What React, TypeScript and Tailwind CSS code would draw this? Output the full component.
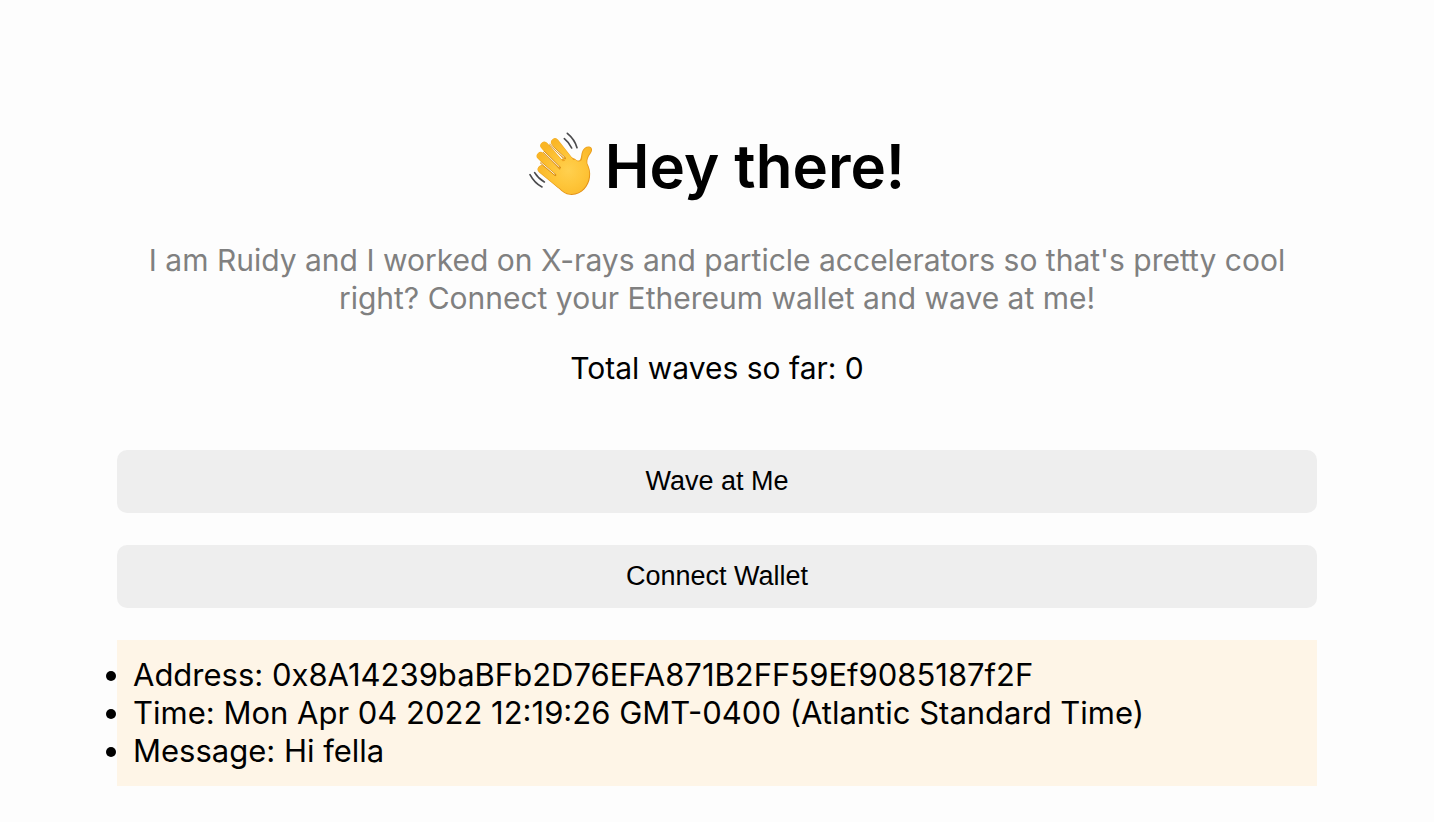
const fingers = "M102 51 L150 112 M70 61 L134 134 M59 92 L124 156 M62 132 L118 178";
const gaps = "M87 58 L132 99 M69 80 L117 127 M60 112 L103 149";
const palm =
  "M112 78 L163 101 C168 106 175 108 178 102 C181 96 180 85 184 77 C188 67 198 61 207 64 C216 68 214 78 208 86 C202 94 198 102 199 114 C206 128 209 140 207 156 C204 182 184 208 152 209 C138 209 128 204 116 192 L72 151 L104 149 L98 130 L117 124 L116 103 L132 98 Z";

function WavingHand() {
  return (
    <svg viewBox="24 20 192 192" role="img" aria-label="Waving hand" className="mb-1 size-16 shrink-0">
      <defs>
        <radialGradient id="skin" gradientUnits="userSpaceOnUse" cx="142" cy="135" r="95">
          <stop offset="0" stopColor="#ffd04f" />
          <stop offset="0.5" stopColor="#fec539" />
          <stop offset="1" stopColor="#fab626" />
        </radialGradient>
        <linearGradient id="edge" gradientUnits="userSpaceOnUse" x1="90" y1="60" x2="190" y2="210">
          <stop offset="0" stopColor="#f2ae28" />
          <stop offset="1" stopColor="#e08c12" />
        </linearGradient>
      </defs>
      <g strokeLinecap="round" strokeLinejoin="round">
        <path d={palm} fill="url(#edge)" />
        <path d={fingers} fill="none" stroke="url(#edge)" strokeWidth="24" />
        <path
          d="M125 108 L163 103 C172 111 180 110 183 102 C185 94 183 85 187 77 C191 69 199 64 205 66 C213 70 211 77 206 84 C199 93 195 102 197 115 C204 130 206 140 204 154 C201 180 182 205 153 206 C139 206 130 202 118 190 L90 164 L108 150 L119 130 Z"
          fill="url(#skin)"
        />
        <path d={fingers} fill="none" stroke="url(#skin)" strokeWidth="21" />
        <path d={gaps} fill="none" stroke="#d98f16" strokeWidth="6" />
        <path d="M85 56 L129 96 M67 78 L114 124 M58 110 L100 146" fill="none" stroke="#fbf3e2" strokeWidth="3" />
        <path
          d="M139 24 Q161 42 168 67 M130 40 Q145 52 152 68 M27 148 Q41 174 63 185 M41 142 Q52 160 70 170"
          fill="none"
          stroke="#4b4b4d"
          strokeWidth="5"
        />
      </g>
    </svg>
  );
}

const buttonClass =
  "mt-8 w-full rounded-[10px] bg-[#eeeeee] py-4 font-['Liberation_Sans',Arial,sans-serif] text-[27px] leading-[31px] text-black";

export default function App() {
  return (
    <main className="flex min-h-screen justify-center bg-[#fdfdfd] px-10 pt-32 pb-9 font-['Inter',sans-serif] text-[30px] leading-[38px] text-black">
      <div className="flex w-full max-w-[1200px] flex-col">
        <h1 className="flex items-center justify-center gap-3 text-[60px] leading-[76px] font-semibold">
          <WavingHand />
          <span>Hey there!</span>
        </h1>
        <p className="mt-[37px] text-center text-[#808080]">
          I am Ruidy and I worked on X-rays and particle accelerators so that's pretty cool right? Connect your
          Ethereum wallet and wave at me!
        </p>
        <p className="mt-8 mb-[31px] text-center">Total waves so far: 0</p>
        <button type="button" className={buttonClass}>
          Wave at Me
        </button>
        <button type="button" className={buttonClass}>
          Connect Wallet
        </button>
        <ul className="mt-8 list-outside list-disc bg-[#fef5e7] p-4 text-[31px] leading-[38px]">
          <li>Address: 0x8A14239baBFb2D76EFA871B2FF59Ef9085187f2F</li>
          <li>Time: Mon Apr 04 2022 12:19:26 GMT-0400 (Atlantic Standard Time)</li>
          <li>Message: Hi fella</li>
        </ul>
      </div>
    </main>
  );
}
